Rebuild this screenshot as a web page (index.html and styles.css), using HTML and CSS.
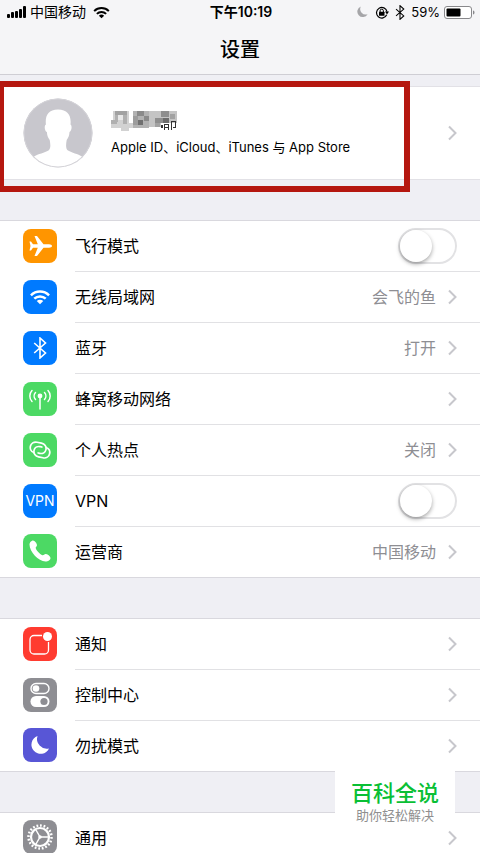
FILE: index.html
```html
<!DOCTYPE html>
<html lang="zh-CN">
<head>
<meta charset="utf-8">
<meta name="viewport" content="width=device-width, initial-scale=1">
<title>设置</title>
<link rel="stylesheet" href="styles.css">
</head>
<body>
<svg class="defs" aria-hidden="true">
  <symbol id="chevron" viewBox="0 0 9 16"><path d="M1 1.5 7.5 8 1 14.5" fill="none" stroke="#c7c7cc" stroke-width="2"/></symbol>
  <symbol id="wifi" viewBox="0 0 22 16"><g fill="none" stroke="currentColor" stroke-width="2.6"><path d="M1.5 6.2a13.6 13.6 0 0 1 19 0"/><path d="M5 9.8a8.6 8.6 0 0 1 12 0"/></g><path d="M7.6 12.2a4.9 4.9 0 0 1 6.8 0L11 15.6z" fill="currentColor"/></symbol>
  <symbol id="bluetooth" viewBox="0 0 14 22"><path d="M1.200 6 12.500 16l-5.500 5V1l5.500 5L1.200 16" fill="none" stroke="currentColor" stroke-width="1.600"/></symbol>
</svg>
<header class="top">
  <div class="status">
    <div class="status-left">
      <svg class="signal" viewBox="0 0 19 12"><rect x="0" y="8" width="3" height="4" rx="1"/><rect x="4" y="6" width="3" height="6" rx="1"/><rect x="8" y="5" width="3" height="7" rx="1"/><rect x="12" y="3" width="3" height="9" rx="1"/><rect x="16" y="0" width="3" height="12" rx="1"/></svg>
      <span>中国移动</span>
      <svg class="status-wifi"><use href="#wifi"/></svg>
    </div>
    <span class="clock">下午10:19</span>
    <div class="status-right">
      <svg class="status-moon" viewBox="0 0 10 11"><path d="M3.500.5a5 5 0 1 0 6.200 7A5 5 0 0 1 3.500.5z" fill="#a5a5a8"/></svg>
      <svg class="status-lock" viewBox="0 0 14 13"><path d="M11.700 8.800a5.300 5.300 0 1 1 .3-3.200" fill="none" stroke="#000" stroke-width="1.200"/><path d="M10 5.400h4l-2 3z"/><rect x="4" y="5.800" width="5.500" height="4" rx=".5"/><path d="M5.100 6V4.800a1.650 1.650 0 0 1 3.300 0V6" fill="none" stroke="#000"/></svg>
      <svg class="status-bt"><use href="#bluetooth"/></svg>
      <span>59%</span>
      <svg class="battery" viewBox="0 0 31 13"><rect x=".5" y=".5" width="27" height="12" rx="2.500" fill="#fff" stroke="#88888b"/><rect x="2.500" y="2.500" width="14" height="8" rx="1"/><path d="M29 4.500c2 .5 2 3.500 0 4z" fill="#88888b"/></svg>
    </div>
  </div>
  <h1>设置</h1>
</header>
<main>
  <section class="profile-area">
    <a class="profile" href="#">
      <svg class="avatar" viewBox="0 0 70 70"><circle cx="35" cy="35" r="34.500" fill="#c8c7cd"/><path d="M10.500 59c5-3.500 11-4 15-6.500 2.500-2 2-6 1.200-10.500-2-2.500-2.600-5-2.800-8-2.400-1-2.900-6.500-1-7.500C22 18 25 11.500 35 11.500S48.500 18 47.500 26.500c1.800 1 1.300 6.500-1 7.500-.2 3-.8 5.500-2.800 8-.8 4.500-1.200 8.500 1.300 10.500 4 2.500 9.500 3 14.500 6.500a34 34 0 0 1-49 0z" fill="#fff"/><circle cx="35" cy="35" r="34" fill="none" stroke="#d4d3d8"/></svg>
      <span class="profile-text">
        <svg class="mosaic" viewBox="0 0 68 23" role="img" aria-label="姓名已隐藏" shape-rendering="crispEdges">
          <path fill="#d2d2d2" d="M2 1h16v17H2zM0 13h22v5H0zM10 17h8v4h-8z"/><path fill="#a2a2a2" d="M4 1h12v4H4z"/><path fill="#b0b0b0" d="M4 5h3v7H4zM12 5h4v9h-4zM0 10h6v4H0z"/><path fill="#e8e8e8" d="M7 5h5v5H7z"/>
          <path fill="#b2b2b2" d="M22 1h16v17H22z"/><path fill="#8a8a8a" d="M26 1h7v5h-7zM33 6h5v5h-5z"/><path fill="#707070" d="M27 10h5v5h-5z"/><path fill="#9c9c9c" d="M22 6h5v9h-5z"/>
          <path fill="#c4c4c4" d="M38 1h28v12H38zM38 13h12v4H38z"/><path fill="#8e8e8e" d="M50 1h8v6h-8zM44 8h8v5h-8z"/><path fill="#6c6c6c" d="M52 8h6v5h-6z"/><path fill="#a2a2a2" d="M59 4h5v5h-5zM44 13h5v4h-5z"/>
          <path d="M50 15h2v3h-2zM53 14h5v1h-5zM53 14h1v6h-1zM57 14h1v6h-1zM53 17h5v1h-5zM60 11h1v9h-1zM60 11h5v1h-5zM64 11h1v6h-1zM62 17h3v1h-3z" fill="#333"/>
        </svg>
        <span>Apple ID、iCloud、iTunes 与 App Store</span>
      </span>
      <svg class="chevron"><use href="#chevron"/></svg>
    </a>
    <div class="highlight"></div>
  </section>

  <section class="group">
    <label class="row">
      <svg class="icon orange" viewBox="0 0 34 34"><path d="M29 17c0-1-1.300-1.700-3-1.700h-5.500L14 7h-2.500l3.300 8.300H10L8 12.500H6.500L7.500 17l-1 4.500H8l2-2.800h4.800L11.500 27H14l6.500-8.300H26c1.700 0 3-.7 3-1.700z" fill="#fff"/></svg>
      <span class="cell"><span class="name">飞行模式</span><input class="switch" type="checkbox" role="switch"></span>
    </label>
    <a class="row" href="#">
      <svg class="icon blue" viewBox="0 0 34 34"><use href="#wifi" x="6.500" y="9" width="21" height="16"/></svg>
      <span class="cell"><span class="name">无线局域网</span><span class="value">会飞的鱼</span><svg class="chevron"><use href="#chevron"/></svg></span>
    </a>
    <a class="row" href="#">
      <svg class="icon blue" viewBox="0 0 34 34"><use href="#bluetooth" x="10" y="6" width="14" height="22"/></svg>
      <span class="cell"><span class="name">蓝牙</span><span class="value">打开</span><svg class="chevron"><use href="#chevron"/></svg></span>
    </a>
    <a class="row" href="#">
      <svg class="icon green" viewBox="0 0 34 34"><g fill="none" stroke="#fff" stroke-width="1.500" stroke-linecap="round"><path d="M17 14v13M12.500 10.500a5.200 5.200 0 0 0 0 7M21.500 10.500a5.200 5.200 0 0 1 0 7M9 8.500a8 8 0 0 0 0 11M25 8.500a8 8 0 0 1 0 11"/></g><circle cx="17" cy="14" r="2.400" fill="#fff"/></svg>
      <span class="cell"><span class="name">蜂窝移动网络</span><svg class="chevron"><use href="#chevron"/></svg></span>
    </a>
    <a class="row" href="#">
      <svg class="icon green" viewBox="0 0 34 34"><g fill="none" stroke="#fff" stroke-width="1.700" stroke-linecap="round" transform="rotate(12 17 17)"><path d="M11.500 20.800C8.500 20.300 6.800 18 6.800 15.300c0-3 2.400-5.300 5.700-5.300h4.500c3.400 0 5.800 2.400 5.800 5.200 0 3-2.200 5.100-5.300 5.100h-1.700"/><path d="M22.500 13.200c3 .5 4.700 2.800 4.700 5.500 0 3-2.400 5.300-5.700 5.300H17c-3.400 0-5.800-2.400-5.800-5.200 0-3 2.200-5.100 5.300-5.100h1.700"/></g></svg>
      <span class="cell"><span class="name">个人热点</span><span class="value">关闭</span><svg class="chevron"><use href="#chevron"/></svg></span>
    </a>
    <label class="row">
      <span class="icon blue vpn">VPN</span>
      <span class="cell"><span class="name">VPN</span><input class="switch" type="checkbox" role="switch"></span>
    </label>
    <a class="row" href="#">
      <svg class="icon green" viewBox="0 0 34 34"><path d="M9.500 6.500c1.500-.8 4.500 2.500 4.500 4.500 0 1.500-1.500 2-1.300 3 .5 2.500 4 6 6.800 7.200 1.300.4 1.700-1.500 3.500-1.200 2 .3 4.500 2.500 4.500 4 0 2-2.500 3.500-5 3.500C15.500 27 6.500 18 6.500 10.500c0-1.700 1.300-3.300 3-4z" fill="#fff"/></svg>
      <span class="cell"><span class="name">运营商</span><span class="value">中国移动</span><svg class="chevron"><use href="#chevron"/></svg></span>
    </a>
  </section>

  <section class="group">
    <a class="row" href="#">
      <svg class="icon red" viewBox="0 0 34 34"><path d="M19 8.500h-8a4 4 0 0 0-4 4V23a4 4 0 0 0 4 4h10.500a4 4 0 0 0 4-4v-8" fill="none" stroke="#fff" stroke-width="1.300"/><circle cx="24.500" cy="9.500" r="4.500" fill="#fff"/></svg>
      <span class="cell"><span class="name">通知</span><svg class="chevron"><use href="#chevron"/></svg></span>
    </a>
    <a class="row" href="#">
      <svg class="icon gray" viewBox="0 0 34 34"><rect x="8" y="5.500" width="18" height="10" rx="5" fill="none" stroke="#fff" stroke-width="1.400"/><circle cx="13" cy="10.500" r="3.300" fill="#fff"/><rect x="7.500" y="18" width="19" height="11" rx="5.500" fill="#fff"/><circle cx="21" cy="23.500" r="3.600" fill="#8e8e93"/></svg>
      <span class="cell"><span class="name">控制中心</span><svg class="chevron"><use href="#chevron"/></svg></span>
    </a>
    <a class="row" href="#">
      <svg class="icon purple" viewBox="0 0 34 34"><path d="M14.500 8a9.200 9.200 0 1 0 11.500 12.500A9.800 9.800 0 0 1 14.500 8z" fill="#fff"/></svg>
      <span class="cell"><span class="name">勿扰模式</span><svg class="chevron"><use href="#chevron"/></svg></span>
    </a>
  </section>

  <section class="group">
    <a class="row" href="#">
      <svg class="icon gray" viewBox="0 0 34 34"><g fill="none" stroke="#fff"><circle cx="17" cy="17" r="11.500" stroke-width="2.500" pathLength="40" stroke-dasharray="1 1"/><circle cx="17" cy="17" r="9" stroke-width="2.200"/><path d="M17 17h8M17 17l-4-7M17 17l-4 7" stroke-width="1.500"/></g><circle cx="17" cy="17" r="1.800" fill="#fff"/></svg>
      <span class="cell"><span class="name">通用</span><svg class="chevron"><use href="#chevron"/></svg></span>
    </a>
  </section>
</main>
<aside class="watermark"><strong>百科全说</strong><span>助你轻松解决</span></aside>
</body>
</html>
```

FILE: styles.css
```css
* { box-sizing: border-box; }

body {
  margin: 0;
  background: #efeff4;
  color: #000;
  font-family: Inter, "Noto Sans CJK SC", sans-serif;
  font-size: 16px;
  line-height: 24px;
  min-height: 100vh;
  overflow: hidden;
}

a { color: inherit; text-decoration: none; }
svg { display: block; flex: none; }
.defs { position: absolute; width: 0; height: 0; }

.top {
  height: 75px;
  background: #f5f5f7;
  border-bottom: 1px solid #cfced4;
}

.status {
  display: grid;
  grid-template-columns: 1fr auto 1fr;
  align-items: center;
  height: 24px;
  padding: 0 5px 0 7px;
  font-size: 14px;
}

.status-left, .status-right { display: flex; align-items: center; }
.status-left { gap: 4px; }
.status-right { justify-content: flex-end; gap: 4px; font-size: 13px; }
.clock { font-size: 14px; font-weight: 600; }
.signal { width: 19px; height: 12px; }
.status-wifi { width: 17px; height: 13px; margin-left: 3px; }
.status-moon { width: 11px; height: 12px; margin-right: 3px; }
.status-lock { width: 14px; height: 13px; margin-right: 2px; }
.status-bt { width: 10px; height: 15px; margin-right: 2px; }
.battery { width: 31px; height: 13px; }

h1 {
  margin: 13px 0 0;
  font-size: 20px;
  line-height: 26px;
  font-weight: 500;
  text-align: center;
}

.profile-area { position: relative; margin-top: 11px; }

.profile {
  display: flex;
  align-items: center;
  height: 94px;
  padding: 0 23px;
  background: #fff;
  border-top: 1px solid #e2e1e6;
  border-bottom: 1px solid #e2e1e6;
}

.avatar { width: 70px; height: 70px; margin-right: 18px; }
.profile-text { flex: 1; font-size: 13px; line-height: 20px; }
.mosaic { width: 68px; height: 23px; margin-bottom: 4px; }
.chevron { width: 9px; height: 16px; }

.highlight {
  position: absolute;
  top: -5px;
  bottom: -12px;
  left: 0;
  right: 70px;
  border: 6px solid #b5170f;
  border-left-width: 4px;
  pointer-events: none;
}

.group {
  margin-top: 40px;
  background: #fff;
  border-top: 1px solid #d9d8de;
  border-bottom: 1px solid #d9d8de;
}

.row {
  display: flex;
  align-items: center;
  gap: 18px;
  padding-left: 23px;
}

.cell {
  display: flex;
  flex: 1;
  align-items: center;
  height: 51px;
  padding-right: 23px;
  border-bottom: 1px solid #e1e1e4;
}

.row:last-child .cell { height: 50px; border-bottom: 0; }
.name { flex: 1; }
.value { margin-right: 12px; color: #8e8e93; }

.icon {
  flex: none;
  width: 34px;
  height: 34px;
  margin-bottom: 2px;
  border-radius: 8px;
  color: #fff;
}

.orange { background: #ff9500; }
.blue { background: #007aff; }
.green { background: #4cd964; }
.red { background: #ff3b30; }
.gray { background: #8e8e93; }
.purple { background: #5856d6; }
.vpn { font-size: 14px; line-height: 34px; text-align: center; }

.switch {
  appearance: none;
  width: 59px;
  height: 36px;
  margin: 0;
  border: 2px solid #e2e2e4;
  border-radius: 18px;
  background: #fff;
}

.switch::before {
  content: "";
  display: block;
  width: 32px;
  height: 32px;
  border-radius: 50%;
  background: #fff;
  box-shadow: 0 2px 4px rgba(0, 0, 0, 0.35);
}

.switch:checked { background: #4cd964; }
.switch:checked::before { margin-left: 23px; }

.watermark {
  position: fixed;
  right: 25px;
  bottom: 23px;
  display: flex;
  flex-direction: column;
  align-items: center;
  width: 120px;
  padding: 9px 0 8px;
  background: #fff;
  color: #8f8f8f;
  font-size: 13px;
  line-height: 14px;
}

.watermark strong {
  color: #0abf35;
  font-size: 22px;
  line-height: 29px;
  font-weight: 500;
}
```
